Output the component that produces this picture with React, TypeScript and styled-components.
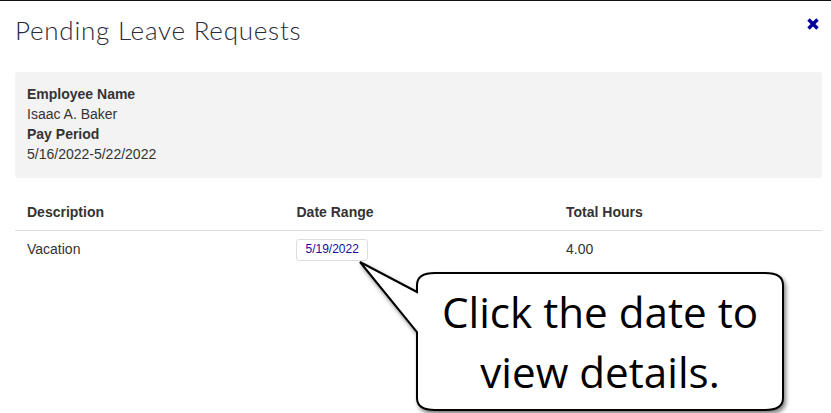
import styled, { createGlobalStyle } from "styled-components";

const GlobalStyle = createGlobalStyle`
    html, body {
        margin: 0;
        padding: 0;
        background: #fff;
        overflow: hidden;
    }
    body {
        font-family: "Liberation Sans", Arial, sans-serif;
        font-size: 14px;
        line-height: 20px;
        color: #333;
    }
`;

const Modal = styled.div`
    position: relative;
    width: 831px;
    height: 413px;
    box-sizing: border-box;
    border-top: 1px solid #111;
    overflow: hidden;
`;

const Header = styled.header`
    display: flex;
    justify-content: space-between;
    align-items: flex-start;
    height: 71px;
    padding: 12px 12px 0 15px;
    box-sizing: border-box;
`;

const Title = styled.h1`
    margin: 0;
    font-family: "Lato", sans-serif;
    font-size: 26px;
    line-height: 34px;
    font-weight: 300;
    letter-spacing: 0.76px;
    color: #2b2b3a;
`;

const CloseButton = styled.button`
    display: flex;
    padding: 0;
    margin-top: 5px;
    border: 0;
    background: none;
`;

const Summary = styled.section`
    margin: 0 9px 0 15px;
    height: 106px;
    box-sizing: border-box;
    padding: 12px;
    background: #f3f3f3;
    border-radius: 3px;
`;

const Label = styled.div`
    font-weight: 700;
`;

const Value = styled.div``;

const Table = styled.div`
    margin: 16px 9px 0 15px;
`;

const Row = styled.div<{ $head?: boolean }>`
    display: grid;
    grid-template-columns: 269.5px 269.5px 1fr;
    align-items: center;
    padding: 0 12px;
    height: ${({ $head }) => ($head ? "36px" : "35px")};
    font-weight: ${({ $head }) => ($head ? 700 : 400)};
    border-bottom: ${({ $head }) => ($head ? "1px solid #ddd" : "0")};
`;

const DateButton = styled.a`
    justify-self: start;
    margin: 2px 0 0 -1px;
    padding: 0 8px 0 9px;
    height: 22px;
    box-sizing: border-box;
    border: 1px solid #ddd;
    border-radius: 3px;
    font-size: 12px;
    line-height: 18px;
    color: #1a0a9c;
`;

const Callout = styled.div`
    position: absolute;
    left: 355px;
    top: 256px;
    width: 440px;
    height: 157px;
`;

const CalloutShape = styled.svg`
    position: absolute;
    inset: 0;
`;

const CalloutText = styled.div`
    position: absolute;
    left: 62px;
    top: 17px;
    width: 366px;
    height: 136px;
    display: flex;
    align-items: center;
    justify-content: center;
    text-align: center;
    font-family: "Open Sans", sans-serif;
    font-size: 42.2px;
    line-height: 60px;
    color: #000;
`;

export default function App() {
    return (
        <Modal>
            <GlobalStyle />
            <Header>
                <Title>Pending Leave Requests</Title>
                <CloseButton aria-label="Close">
                    <svg width="12" height="12" viewBox="0 0 12 12">
                        <path
                            d="M1.5 1.5 L10.5 10.5 M10.5 1.5 L1.5 10.5"
                            stroke="#00009c"
                            strokeWidth="3.4"
                        />
                    </svg>
                </CloseButton>
            </Header>
            <Summary>
                <Label>Employee Name</Label>
                <Value>Isaac A. Baker</Value>
                <Label>Pay Period</Label>
                <Value>5/16/2022-5/22/2022</Value>
            </Summary>
            <Table>
                <Row $head>
                    <div>Description</div>
                    <div>Date Range</div>
                    <div>Total Hours</div>
                </Row>
                <Row>
                    <div>Vacation</div>
                    <DateButton>5/19/2022</DateButton>
                    <div>4.00</div>
                </Row>
            </Table>
            <Callout>
                <CalloutShape width="440" height="157" viewBox="0 0 440 157">
                    <defs>
                        <filter id="shade" x="-5%" y="-5%" width="112%" height="112%">
                            <feDropShadow
                                dx="2"
                                dy="3"
                                stdDeviation="2"
                                floodColor="#000"
                                floodOpacity="0.5"
                            />
                        </filter>
                    </defs>
                    <path
                        d="M5 5 L62 35 L62 28 Q62 16 80 16 L410 16 Q428 16 428 28 L428 141 Q428 153 410 153 L80 153 Q62 153 62 141 L62 75 Z"
                        fill="#fff"
                        stroke="#000"
                        strokeWidth="2"
                        filter="url(#shade)"
                    />
                </CalloutShape>
                <CalloutText>
                    Click the date to
                    <br />
                    view details.
                </CalloutText>
            </Callout>
        </Modal>
    );
}
